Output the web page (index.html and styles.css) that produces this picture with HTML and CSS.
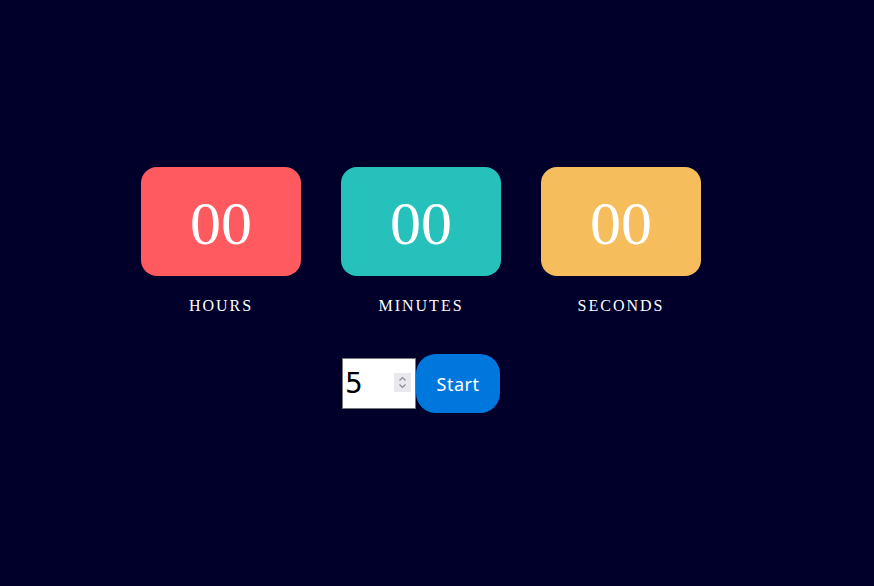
FILE: index.html
```html
<!DOCTYPE html>
<html lang="en">
<head>
<meta charset="utf-8">
<title>Countdown</title>
<link rel="stylesheet" href="styles.css">
</head>
<body>
<main class="app">
  <div class="timers">
    <div class="unit">
      <div class="box box-red">00</div>
      <div class="label">Hours</div>
    </div>
    <div class="unit">
      <div class="box box-teal">00</div>
      <div class="label">Minutes</div>
    </div>
    <div class="unit">
      <div class="box box-yellow">00</div>
      <div class="label">Seconds</div>
    </div>
  </div>
  <div class="controls">
    <div class="input-wrap">
      <input class="minutes-input" type="number" value="5" min="1">
      <span class="spinner" aria-hidden="true">
        <svg width="17" height="19" viewBox="0 0 17 19">
          <path d="M5.5 7.5 L8.5 4.5 L11.5 7.5" fill="none" stroke="#8a8a92" stroke-width="1.2"/>
          <path d="M5.5 11.5 L8.5 14.5 L11.5 11.5" fill="none" stroke="#8a8a92" stroke-width="1.2"/>
        </svg>
      </span>
    </div>
    <button class="start-btn" type="button">Start</button>
  </div>
</main>
</body>
</html>
```
FILE: styles.css
```css
html, body {
  margin: 0;
  padding: 0;
  height: 100%;
  background: #00002a;
}
.app {
  box-sizing: border-box;
  width: 842px;
  height: 586px;
  display: flex;
  flex-direction: column;
  align-items: center;
  padding-top: 167px;
  font-family: "Liberation Serif", "Times New Roman", serif;
}
.timers {
  display: flex;
  gap: 40px;
}
.unit {
  display: flex;
  flex-direction: column;
  align-items: center;
}
.box {
  width: 160px;
  height: 109px;
  border-radius: 16px;
  display: flex;
  align-items: center;
  justify-content: center;
  color: #ffffff;
  font-size: 62px;
  line-height: 1;
  padding-top: 2px;
  box-sizing: border-box;
}
.box-red { background: #ff5a5f; }
.box-teal { background: #27c1bc; }
.box-yellow { background: #f5bd5c; }
.label {
  margin-top: 21px;
  color: #ffffff;
  font-size: 16px;
  letter-spacing: 2px;
  text-transform: uppercase;
}
.controls {
  margin-top: 39px;
  display: flex;
  align-items: center;
}
.input-wrap {
  position: relative;
  display: flex;
}
.minutes-input {
  box-sizing: border-box;
  width: 74px;
  height: 51px;
  font-family: "DejaVu Sans", sans-serif;
  font-size: 28px;
  padding: 0 2px;
  border: 1px solid #767676;
  background: #fff;
  color: #000;
  -moz-appearance: textfield;
}
.minutes-input::-webkit-inner-spin-button,
.minutes-input::-webkit-outer-spin-button {
  -webkit-appearance: none;
  margin: 0;
}
.spinner {
  position: absolute;
  left: 52px;
  top: 15px;
  width: 17px;
  height: 19px;
  background: #e9e9ed;
  display: flex;
}
.start-btn {
  width: 84px;
  height: 59px;
  border: none;
  border-radius: 20px;
  background: #0077dd;
  color: #ffffff;
  font-family: "Noto Sans", "Open Sans", sans-serif;
  font-size: 18px;
  letter-spacing: 0.5px;
  padding: 0;
}
```
